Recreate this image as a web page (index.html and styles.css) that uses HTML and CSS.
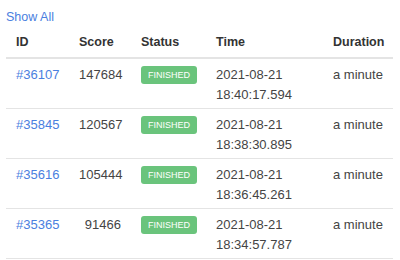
FILE: index.html
```html
<!DOCTYPE html>
<html>
<head>
<meta charset="utf-8">
<link rel="stylesheet" href="styles.css">
</head>
<body>
<div class="page">
  <a class="show-all" href="#">Show All</a>
  <table class="runs">
    <colgroup>
      <col class="c-id"><col class="c-score"><col class="c-status"><col class="c-time"><col class="c-dur">
    </colgroup>
    <thead>
      <tr><th>ID</th><th>Score</th><th>Status</th><th>Time</th><th>Duration</th></tr>
    </thead>
    <tbody>
      <tr><td><a href="#">#36107</a></td><td class="num">147684</td><td><span class="badge">FINISHED</span></td><td>2021-08-21<br>18:40:17.594</td><td>a minute</td></tr>
      <tr><td><a href="#">#35845</a></td><td class="num">120567</td><td><span class="badge">FINISHED</span></td><td>2021-08-21<br>18:38:30.895</td><td>a minute</td></tr>
      <tr><td><a href="#">#35616</a></td><td class="num">105444</td><td><span class="badge">FINISHED</span></td><td>2021-08-21<br>18:36:45.261</td><td>a minute</td></tr>
      <tr><td><a href="#">#35365</a></td><td class="num">91466</td><td><span class="badge">FINISHED</span></td><td>2021-08-21<br>18:34:57.787</td><td>a minute</td></tr>
    </tbody>
  </table>
</div>
</body>
</html>
```
FILE: styles.css
```css
html, body { margin: 0; padding: 0; background: #fff; }
body {
  font-family: "Liberation Sans", Arial, sans-serif;
  font-size: 13px;
  line-height: 19.5px;
  color: #444;
}
.page { padding: 8px 7px 0 6px; }
a { color: #4a80e0; text-decoration: none; }
.show-all { display: block; font-size: 12.5px; }
.runs {
  width: 387px;
  border-collapse: collapse;
  table-layout: fixed;
}
.c-id { width: 63px; }
.c-score { width: 62px; }
.c-status { width: 75px; }
.c-time { width: 117px; }
.c-dur { width: 70px; }
.runs th, .runs td {
  padding: 6px 10px 4px 10px;
  text-align: left;
  vertical-align: top;
}
.runs th {
  padding: 5px 10px 5px 10px;
  font-size: 12.5px;
  font-weight: bold;
  color: #333;
  border-bottom: 2px solid #e4e4e4;
}
.runs td { border-bottom: 1px solid #e4e4e4; height: 39px; }
.runs td.num { text-align: right; }
.badge {
  display: inline-block;
  background: #6ac47c;
  color: #fff;
  font-size: 9px;
  line-height: 18px;
  padding: 0 7px;
  border-radius: 3px;
  vertical-align: top;
  margin-top: 1px;
  letter-spacing: 0;
}
```
